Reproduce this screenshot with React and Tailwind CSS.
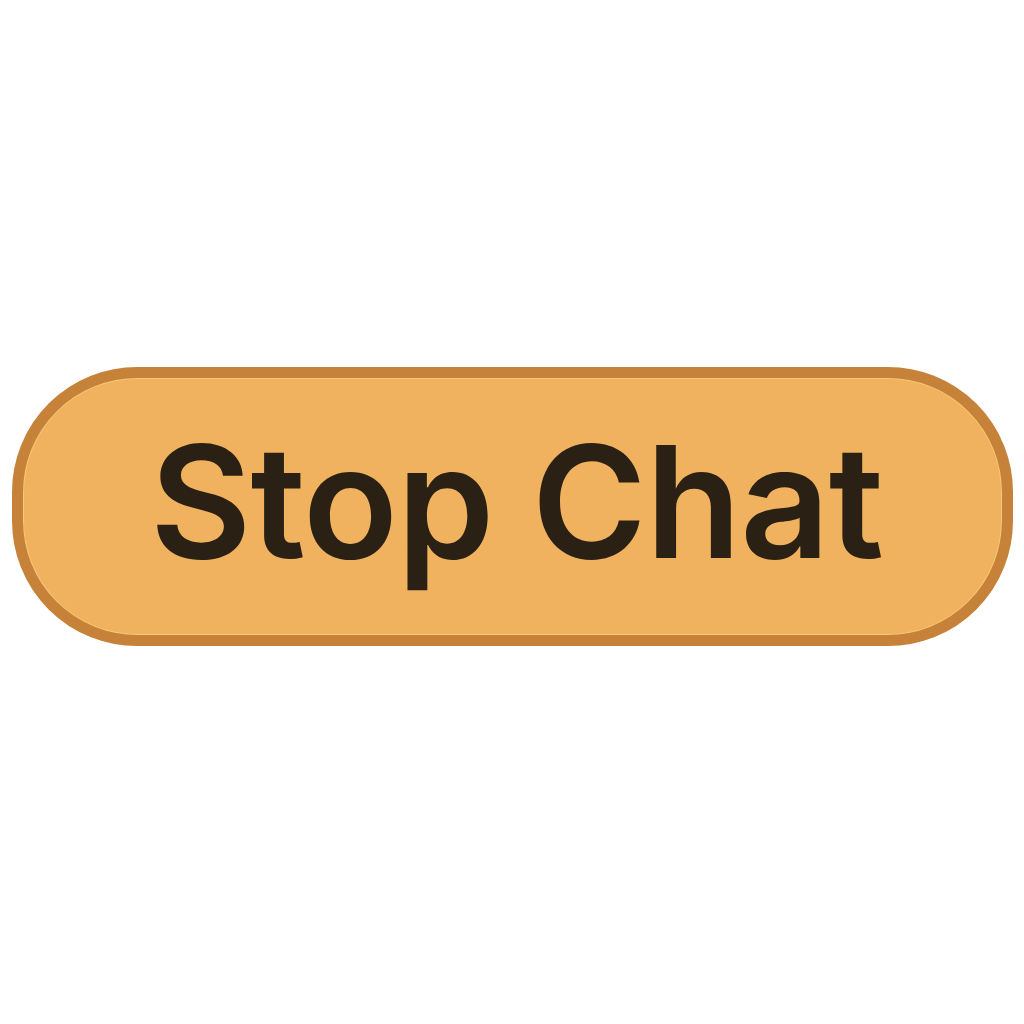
export default function App() {
  return (
    <div className="min-h-screen w-full bg-white pt-[367px] pl-[12px]">
      <button
        type="button"
        className="flex h-[279px] w-[1001px] items-center justify-center rounded-[125px] border-[11px] border-[#c7823a] bg-[#f0b25e] pl-[8px] pb-[10px] shadow-[inset_0_0_0_1px_#f6c878]"
      >
        <span
          className="text-[156px] font-semibold leading-none tracking-[-1px] text-[#2a2114]"
          style={{ fontFamily: 'Inter, "Liberation Sans", sans-serif' }}
        >
          Stop Chat
        </span>
      </button>
    </div>
  );
}
